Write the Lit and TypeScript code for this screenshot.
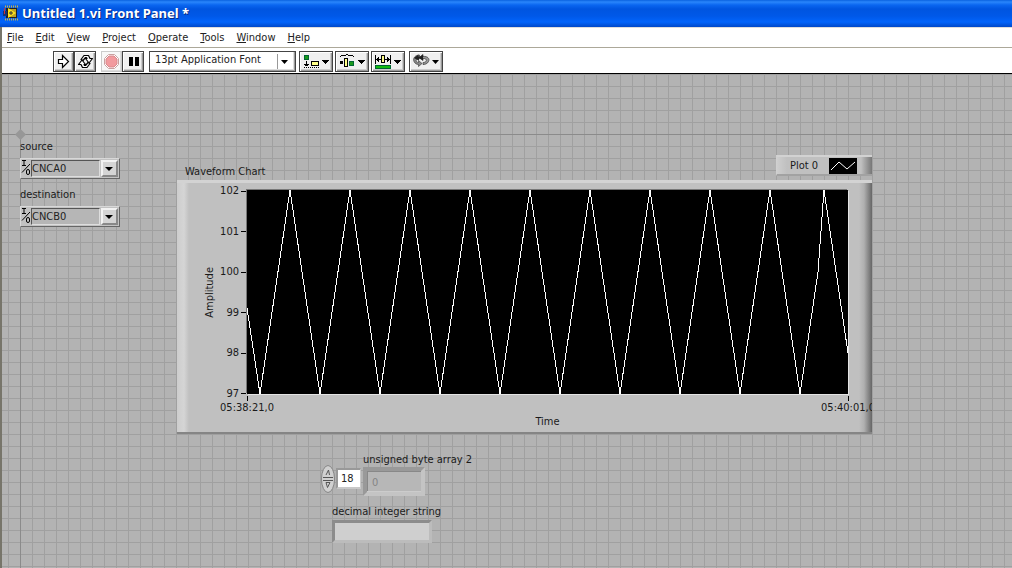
import { LitElement, html, css, svg } from "lit";
import { customElement, property } from "lit/decorators.js";

const FONT = css`11px/14px "DejaVu Sans Condensed", "Noto Sans", sans-serif`;

@customElement("lv-toolbar")
export class LvToolbar extends LitElement {
  static styles = css`
    :host {
      display: flex;
      align-items: center;
      gap: 5px;
      padding: 2px 0 1px 51px;
      background: #fff;
      border-top: 1px solid #aca899;
      border-bottom: 1px solid #000;
      box-sizing: border-box;
      height: 27px;
    }
    .group { display: flex; }
    .menus { gap: 2px; margin-left: -2px; }
    .apart { margin-left: 2px; }
    button {
      box-sizing: border-box;
      width: 21px;
      height: 21px;
      padding: 0;
      border: 1px solid #444;
      background: #f0f0f0;
      box-shadow: inset 1px 1px #fff, inset -1px -1px #999, inset -2px -2px #ccc;
      display: flex;
      align-items: center;
      justify-content: center;
    }
    .group > button + button:not(.wide) { width: 22px; }
    button.wide { width: 34px; }
    button.off { border-color: #ccc; box-shadow: inset -1px -1px #ddd; background: #f8f8f8; }
    .font { position: relative; display: flex; }
    select {
      appearance: none;
      box-sizing: border-box;
      width: 147px;
      height: 21px;
      padding: 0 20px 2px 5px;
      border: 1px solid #444;
      border-radius: 0;
      color: #222;
      background: #fff;
      box-shadow: inset -1px -1px #999, inset -2px -2px #ddd;
      font: ${FONT};
    }
    .drop { position: absolute; right: 1px; top: 0; pointer-events: none; }
    svg { display: block; }
  `;

  render() {
    const arrow = svg`<path d="M22 8h7l-3.500 4z" fill="#000"/>`;
    return html`
      <div class="group">
        <button aria-label="Run">
          <svg width="19" height="19"><path d="M4.500 7.500h4v-4l6 6l-6 6v-4h-4z" fill="#fff" stroke="#000" stroke-width="1.200"/></svg>
        </button>
        <button aria-label="Run continuously">
          <svg width="19" height="19" fill="#fff" stroke="#000" stroke-width="1.200" stroke-linejoin="round">
            <path d="M5 7.500L8 3.500H12.500L14 6.500H16.500L13 11L9.500 6.500H11L10.500 5.500H9.500L7 8.500z"/>
            <path d="M14 11.500L11 15.500H6.500L5 12.500H2.500L6 8L9.500 12.500H8L8.500 13.500H9.500L12 10.500z"/>
          </svg>
        </button>
      </div>
      <div class="group">
        <button class="off" aria-label="Abort execution" disabled>
          <svg width="19" height="19"><path d="M6.500 2.500h6l4 4v6l-4 4h-6l-4-4v-6z" fill="#fff" stroke="#c9a0a0"/><path d="M7 4h5l3 3v5l-3 3H7l-3-3V7z" fill="#f29a9e" stroke="#d9898d"/></svg>
        </button>
        <button aria-label="Pause">
          <svg width="19" height="19"><path d="M5 5h4v9H5zM11 5h4v9h-4z"/></svg>
        </button>
      </div>
      <div class="font">
        <select aria-label="Text settings"><option>13pt Application Font</option></select>
        <svg class="drop" width="19" height="21"><path d="M1.500 3v15" stroke="#999"/><path d="M5 9h7l-3.500 4z"/></svg>
      </div>
      <div class="group menus">
        <button class="wide" aria-label="Align objects">
          <svg width="32" height="19" shape-rendering="crispEdges">
            <path d="M4.500 3.500h4v4h-4z" fill="#1a9a1a" stroke="#063"/>
            <path d="M6.500 9v4M4 12.500h5M5 13.500h3M4 15.500h1M6 15.500h1M8 15.500h1M10 15.500h1" stroke="#000"/>
            <path d="M11.500 9.500h7v4h-7z" fill="#ff8" stroke="#000"/><path d="M12 15.500h1M14 15.500h1M16 15.500h1M18 15.500h1" stroke="#000"/>${arrow}
          </svg>
        </button>
        <button class="wide" aria-label="Distribute objects">
          <svg width="32" height="19" shape-rendering="crispEdges">
            <path d="M4 4.500h1M5 3.500h5M10 2.500h2M12 3.500h5M17 4.500h1" stroke="#000"/>
            <path d="M4 9h3v3H4z"/><path d="M8.500 6.500h3v8h-3z" fill="#ff8" stroke="#000"/>
            <path d="M13.500 9.500h4v4h-4z" fill="#1a9a1a" stroke="#063"/>${arrow}
          </svg>
        </button>
        <button class="wide" aria-label="Resize objects">
          <svg width="32" height="19" shape-rendering="crispEdges">
            <path d="M3.500 3v9M18.500 3v9M4 7.500h5M13 7.500h5M5.500 6v3M6.500 5v5M16.500 6v3M15.500 5v5" stroke="#000"/>
            <path d="M9.500 3.500h3v7h-3z" fill="#ff8" stroke="#000"/>
            <path d="M3.500 13.500h15v3h-15z" fill="#1b1" stroke="#063"/>${arrow}
          </svg>
        </button>
        <button class="wide apart" aria-label="Reorder">
          <svg width="32" height="19">
            <path d="M13 4.500C17.500 4 20 6.500 18.500 9.500C17.500 12 14.500 12.500 13 12.500V10.500C15.500 10.500 17 9 16 7.500C15.500 6.500 14.500 6.500 13 6.500V8.500L9.500 5.500L13 2.500z" fill="#999" stroke="#333" stroke-width=".7"/>
            <path d="M9.500 3C5 3 2.500 6.500 4 9.500C5 12 7.500 12.500 8.500 12.500V14.500L12 11.500L8.500 8.500V10.500C7 10.500 5.500 9 6.500 7.500C7 6.500 8 6 9.500 6z" fill="#888" stroke="#444" stroke-width=".7"/>
            <path d="M4 6L8.500 2.500V4.500H10L13 2.500V8.500L9.500 6.500L8.500 8.500z" fill="#222"/>${arrow}
          </svg>
        </button>
      </div>
    `;
  }
}

@customElement("io-select")
export class IoSelect extends LitElement {
  @property() label = "";
  @property() value = "";

  static styles = css`
    :host { display: flex; flex-direction: column; gap: 4px; font: ${FONT}; color: #1a1a1a; }
    .box {
      display: flex;
      align-items: stretch;
      box-sizing: border-box;
      width: 100px;
      height: 21px;
      background: #c2c2c2;
      border: 1px solid;
      border-color: #d8d8d8 #666 #666 #d8d8d8;
      position: relative;
    }
    .io { flex: none; width: 10px; }
    select {
      appearance: none;
      flex: 1;
      min-width: 0;
      margin: 1px 19px 1px 0;
      padding: 0;
      border: 1px solid;
      border-color: #555 #ddd #ddd #555;
      border-radius: 0;
      background: #b6b6b6;
      font: ${FONT};
      color: #222;
    }
    .arrow {
      position: absolute;
      right: 1px;
      top: 1px;
      width: 17px;
      height: 17px;
      box-sizing: border-box;
      border: 2px solid;
      border-color: #f2f2f2 #888 #888 #f2f2f2;
      background: #d4d4d4;
      pointer-events: none;
    }
    svg { display: block; }
  `;

  render() {
    return html`
      <label for="s">${this.label}</label>
      <div class="box">
        <svg class="io" width="10" height="19" fill="none" stroke="#000">
          <path d="M1 1.500h4M3 1.500v5M1 6.500h4M1 13.500L9 5" />
          <rect x="5.500" y="10.500" width="3" height="5" rx="1.500" />
        </svg>
        <select id="s"><option>${this.value}</option></select>
        <span class="arrow"><svg width="13" height="13"><path d="M2 5h8l-4 4z" /></svg></span>
      </div>
    `;
  }
}

@customElement("waveform-chart")
export class WaveformChart extends LitElement {
  static styles = css`
    :host { display: block; font: ${FONT}; color: #1a1a1a; }
    .head { display: flex; justify-content: space-between; align-items: flex-end; height: 25px; }
    .title { padding: 0 0 1px 8px; }
    .legend {
      display: flex;
      align-items: center;
      gap: 11px;
      box-sizing: border-box;
      width: 96px;
      height: 21px;
      margin-bottom: 4px;
      padding: 0 0 0 13px;
      border-top: 2px solid #d2d2d2;
      border-left: 1px solid #d0d0d0;
      border-bottom: 2px solid #a2a2a2;
      background: linear-gradient(90deg, #cecece, #c0c0c0 10px, #c0c0c0 84px, #777);
    }
    .panel {
      display: grid;
      grid-template-columns: 12px 29px 601px;
      column-gap: 1px;
      align-content: start;
      box-sizing: border-box;
      height: 254px;
      padding: 7px 0 0 27px;
      overflow: hidden;
      border-top: 3px solid #d3d3d3;
      border-bottom: 2px solid #858585;
      background: linear-gradient(90deg, #cdcdcd, #d5d5d5 7px, #c0c0c0 12px, #c0c0c0 calc(100% - 13px), #b0b0b0 calc(100% - 8px), #666);
    }
    .ylabel { writing-mode: vertical-rl; transform: rotate(180deg); align-self: center; justify-self: center; }
    .yaxis {
      display: flex;
      flex-direction: column;
      justify-content: space-between;
      height: 217px;
      margin: -6px 0 -7px;
      text-align: right;
    }
    .yaxis span { display: flex; align-items: center; justify-content: flex-end; gap: 2px; white-space: nowrap; }
    .yaxis span::after { content: ""; width: 5px; height: 1px; background: #000; }
    .plot { display: block; width: 601px; height: 204px; background: #000; box-shadow: 1px 1px #e4e4e4, -1px -1px #777; }
    .xaxis { grid-column: 3; display: flex; justify-content: space-between; margin: 2px -28px 0; }
    .xaxis span { display: flex; flex-direction: column; align-items: center; width: 56px; white-space: nowrap; }
    .xaxis span::before { content: ""; width: 1px; height: 5px; background: #000; }
    .xlabel { grid-column: 3; text-align: center; }
  `;

  private get points() {
    const pts = ["0,118", "13,204"];
    for (let x = 43; x < 540; x += 60) pts.push(`${x},0`, `${x + 30},204`);
    pts.push("571,82", "577,0", "601,163");
    return pts.join(" ");
  }

  render() {
    return html`
      <div class="head">
        <span class="title">Waveform Chart</span>
        <div class="legend">
          <span>Plot 0</span>
          <svg width="28" height="16" fill="none" stroke="#fff"><rect width="28" height="16" fill="#000" stroke="none" /><path d="M2 12l8-8l8 7l8-7" /></svg>
        </div>
      </div>
      <div class="panel">
        <span class="ylabel">Amplitude</span>
        <div class="yaxis">${[102, 101, 100, 99, 98, 97].map((v) => html`<span>${v}</span>`)}</div>
        <svg class="plot" viewBox="0 0 601 204" preserveAspectRatio="none" role="img" aria-label="Plot 0">
          <polyline points=${this.points} fill="none" stroke="#fff" shape-rendering="crispEdges" />
        </svg>
        <div class="xaxis"><span>05:38:21,0</span><span>05:40:01,0</span></div>
        <div class="xlabel">Time</div>
      </div>
    `;
  }
}

@customElement("app-root")
export class AppRoot extends LitElement {
  static styles = css`
    :host { display: flex; flex-direction: column; min-height: 100vh; font: ${FONT}; color: #1a1a1a; }
    .titlebar {
      display: flex;
      align-items: center;
      gap: 4px;
      box-sizing: border-box;
      height: 27px;
      padding: 0 3px 2px;
      background: linear-gradient(#0a62e0, #2a86fb 2px, #0a66f0 5px, #0055e0 9px, #0058e8 16px, #0264fb 22px, #0048c8 27px);
      color: #fff;
      font: bold 13px/16px "Noto Sans", sans-serif;
      text-shadow: 1px 1px #0a2a80;
    }
    .titlebar h1 { margin: 0; font: inherit; }
    .body { flex: 1; display: flex; flex-direction: column; border-left: 2px solid #77756a; }
    nav { display: flex; gap: 12px; height: 20px; padding: 0 5px; background: #fff; border-top: 1px solid #ddd; box-sizing: border-box; }
    nav button { padding: 0; border: 0; background: none; font: ${FONT}; color: #222; }
    nav u { text-underline-offset: 1px; }
    .canvas {
      flex: 1;
      position: relative;
      overflow: hidden;
      background:
        linear-gradient(#8b8b8b, #8b8b8b) 18px 0 / 1px 100% no-repeat,
        linear-gradient(#8b8b8b, #8b8b8b) 0 60px / 100% 1px no-repeat,
        linear-gradient(90deg, #a0a0a0 1px, transparent 1px) 6px 0 / 12px 12px,
        linear-gradient(#a0a0a0 1px, transparent 1px) 0 0 / 12px 12px,
        #b3b3b3;
    }
    .item { position: absolute; }
    .origin { left: 13px; top: 55px; }
    .source { left: 18px; top: 66px; }
    .destination { left: 18px; top: 114px; }
    .chart { left: 175px; top: 81px; width: 695px; }
    .array { left: 319px; top: 379px; display: grid; grid-template-columns: 14px 25px auto; column-gap: 1px; }
    .array label { grid-column: 3; padding-left: 1px; white-space: nowrap; }
    .spin { align-self: center; margin-top: -6px; }
    input { box-sizing: border-box; min-width: 0; border-radius: 0; font: ${FONT}; color: #222; }
    .index { height: 21px; margin-top: 1px; padding: 0 0 0 3px; border: 2px solid; border-color: #999 #c8c8c8 #c8c8c8 #999; border-right-width: 1px; background: #fff; }
    .cell {
      width: 62px;
      height: 29px;
      margin-left: 1px;
      padding: 2px 0 0 5px;
      border: 4px solid;
      border-color: #999 #c4c4c4 #c4c4c4 #999;
      background: #b7b7b7;
      box-shadow: inset 0 -1px #ccc, inset 1px 1px #888;
      color: #858585;
    }
    .text { left: 330px; top: 431px; display: flex; flex-direction: column; gap: 1px; }
    .text input { width: 100px; height: 23px; border: 3px solid; border-color: #8c8c8c #bcbcbc #bcbcbc #8c8c8c; background: #cfcfcf; }
    svg { display: block; flex: none; }
  `;

  render() {
    const menus = ["File", "Edit", "View", "Project", "Operate", "Tools", "Window", "Help"];
    return html`
      <header class="titlebar">
        <svg width="15" height="16" viewBox="0 0 15 16">
          <path d="M2 1.500h13M2 14.500h13" stroke="#c9b64a" stroke-width="2" stroke-dasharray="1 1" />
          <path d="M3 3h11v10H3z" fill="#222" />
          <path d="M5 4h8v8H5z" fill="#b9a22a" />
          <path d="M0 6h4v5H0z" fill="#137" /><path d="M1.500 3v6" stroke="#c33" />
          <path d="M5 3l8 5l-8 5z" fill="#ffe21a" /><path d="M6 8h4M8 6v4" stroke="#333" />
        </svg>
        <h1>Untitled 1.vi Front Panel *</h1>
      </header>
      <div class="body">
        <nav>${menus.map((m) => html`<button><u>${m[0]}</u>${m.slice(1)}</button>`)}</nav>
        <lv-toolbar></lv-toolbar>
        <main class="canvas">
          <svg class="item origin" width="11" height="11"><path d="M5.500 0L11 5.500L5.500 11L0 5.500z" fill="#979797" /></svg>
          <io-select class="item source" label="source" value="CNCA0"></io-select>
          <io-select class="item destination" label="destination" value="CNCB0"></io-select>
          <waveform-chart class="item chart"></waveform-chart>
          <div class="item array">
            <label for="cell">unsigned byte array 2</label>
            <svg class="spin" width="14" height="28" viewBox="0 0 14 28">
              <ellipse cx="7" cy="14" rx="6.500" ry="13.500" fill="#d0d0d0" stroke="#858585" />
              <path d="M2 12.500h10M2 15.500h10M5 10l2.500-5l1 5M5 17.500h4l-2.500 5z" fill="none" stroke="#555" />
            </svg>
            <input class="index" aria-label="Array index" value="18" />
            <input class="cell" id="cell" value="0" disabled />
          </div>
          <div class="item text">
            <label for="str">decimal integer string</label>
            <input id="str" readonly />
          </div>
        </main>
      </div>
    `;
  }
}
